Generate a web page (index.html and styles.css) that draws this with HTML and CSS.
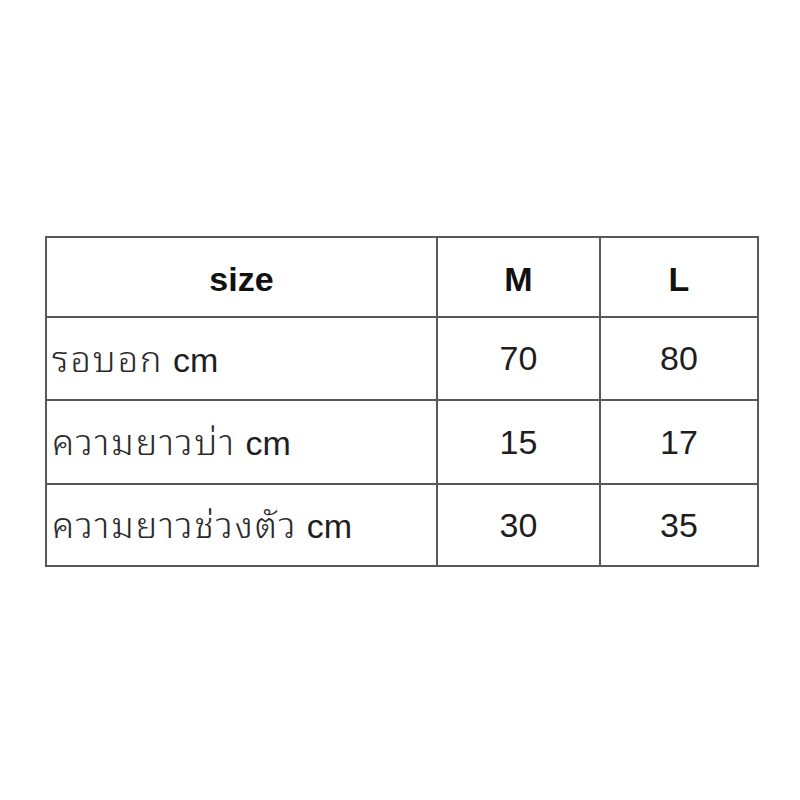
FILE: index.html
```html
<!DOCTYPE html>
<html lang="th">
<head>
<meta charset="utf-8">
<link rel="stylesheet" href="styles.css">
</head>
<body>
<div class="page">
<table class="size-table">
<colgroup>
<col class="c1"><col class="c2"><col class="c3">
</colgroup>
<tr class="head"><th>size</th><th>M</th><th>L</th></tr>
<tr class="r1"><td class="label"><span class="th">รอบอก</span> cm</td><td>70</td><td>80</td></tr>
<tr class="r2"><td class="label"><span class="th">ความยาวบ่า</span> cm</td><td>15</td><td>17</td></tr>
<tr class="r3"><td class="label"><span class="th">ความยาวช่วงตัว</span> cm</td><td>30</td><td>35</td></tr>
</table>
</div>
</body>
</html>
```
FILE: styles.css
```css
html, body {
  margin: 0;
  padding: 0;
  background: #ffffff;
}
.page {
  padding: 236px 0 0 45px;
}
.size-table {
  border-collapse: collapse;
  width: 712px;
  table-layout: fixed;
  font-family: "Liberation Sans", Arial, "Noto Sans Thai Looped", sans-serif;
  font-size: 34px;
  color: #1e1e1e;
}
.c1 { width: 391px; }
.c2 { width: 163px; }
.c3 { width: 158px; }
.size-table th,
.size-table td {
  border: 2px solid #585858;
  text-align: center;
  vertical-align: middle;
  padding: 0;
}
.size-table th {
  font-weight: bold;
  padding-top: 4px;
  color: #111111;
}
.head { height: 80px; }
.r1 { height: 83px; }
.r2 { height: 84px; }
.r3 { height: 82px; }
.size-table td.label {
  text-align: left;
  padding-left: 5px;
  white-space: nowrap;
  line-height: 40px;
}
.th {
  font-family: "Noto Sans Thai Looped", "Liberation Sans", sans-serif;
  font-size: 36px;
  font-weight: 300;
  letter-spacing: 2px;
  line-height: 1;
  color: #2a2a2a;
}
```
